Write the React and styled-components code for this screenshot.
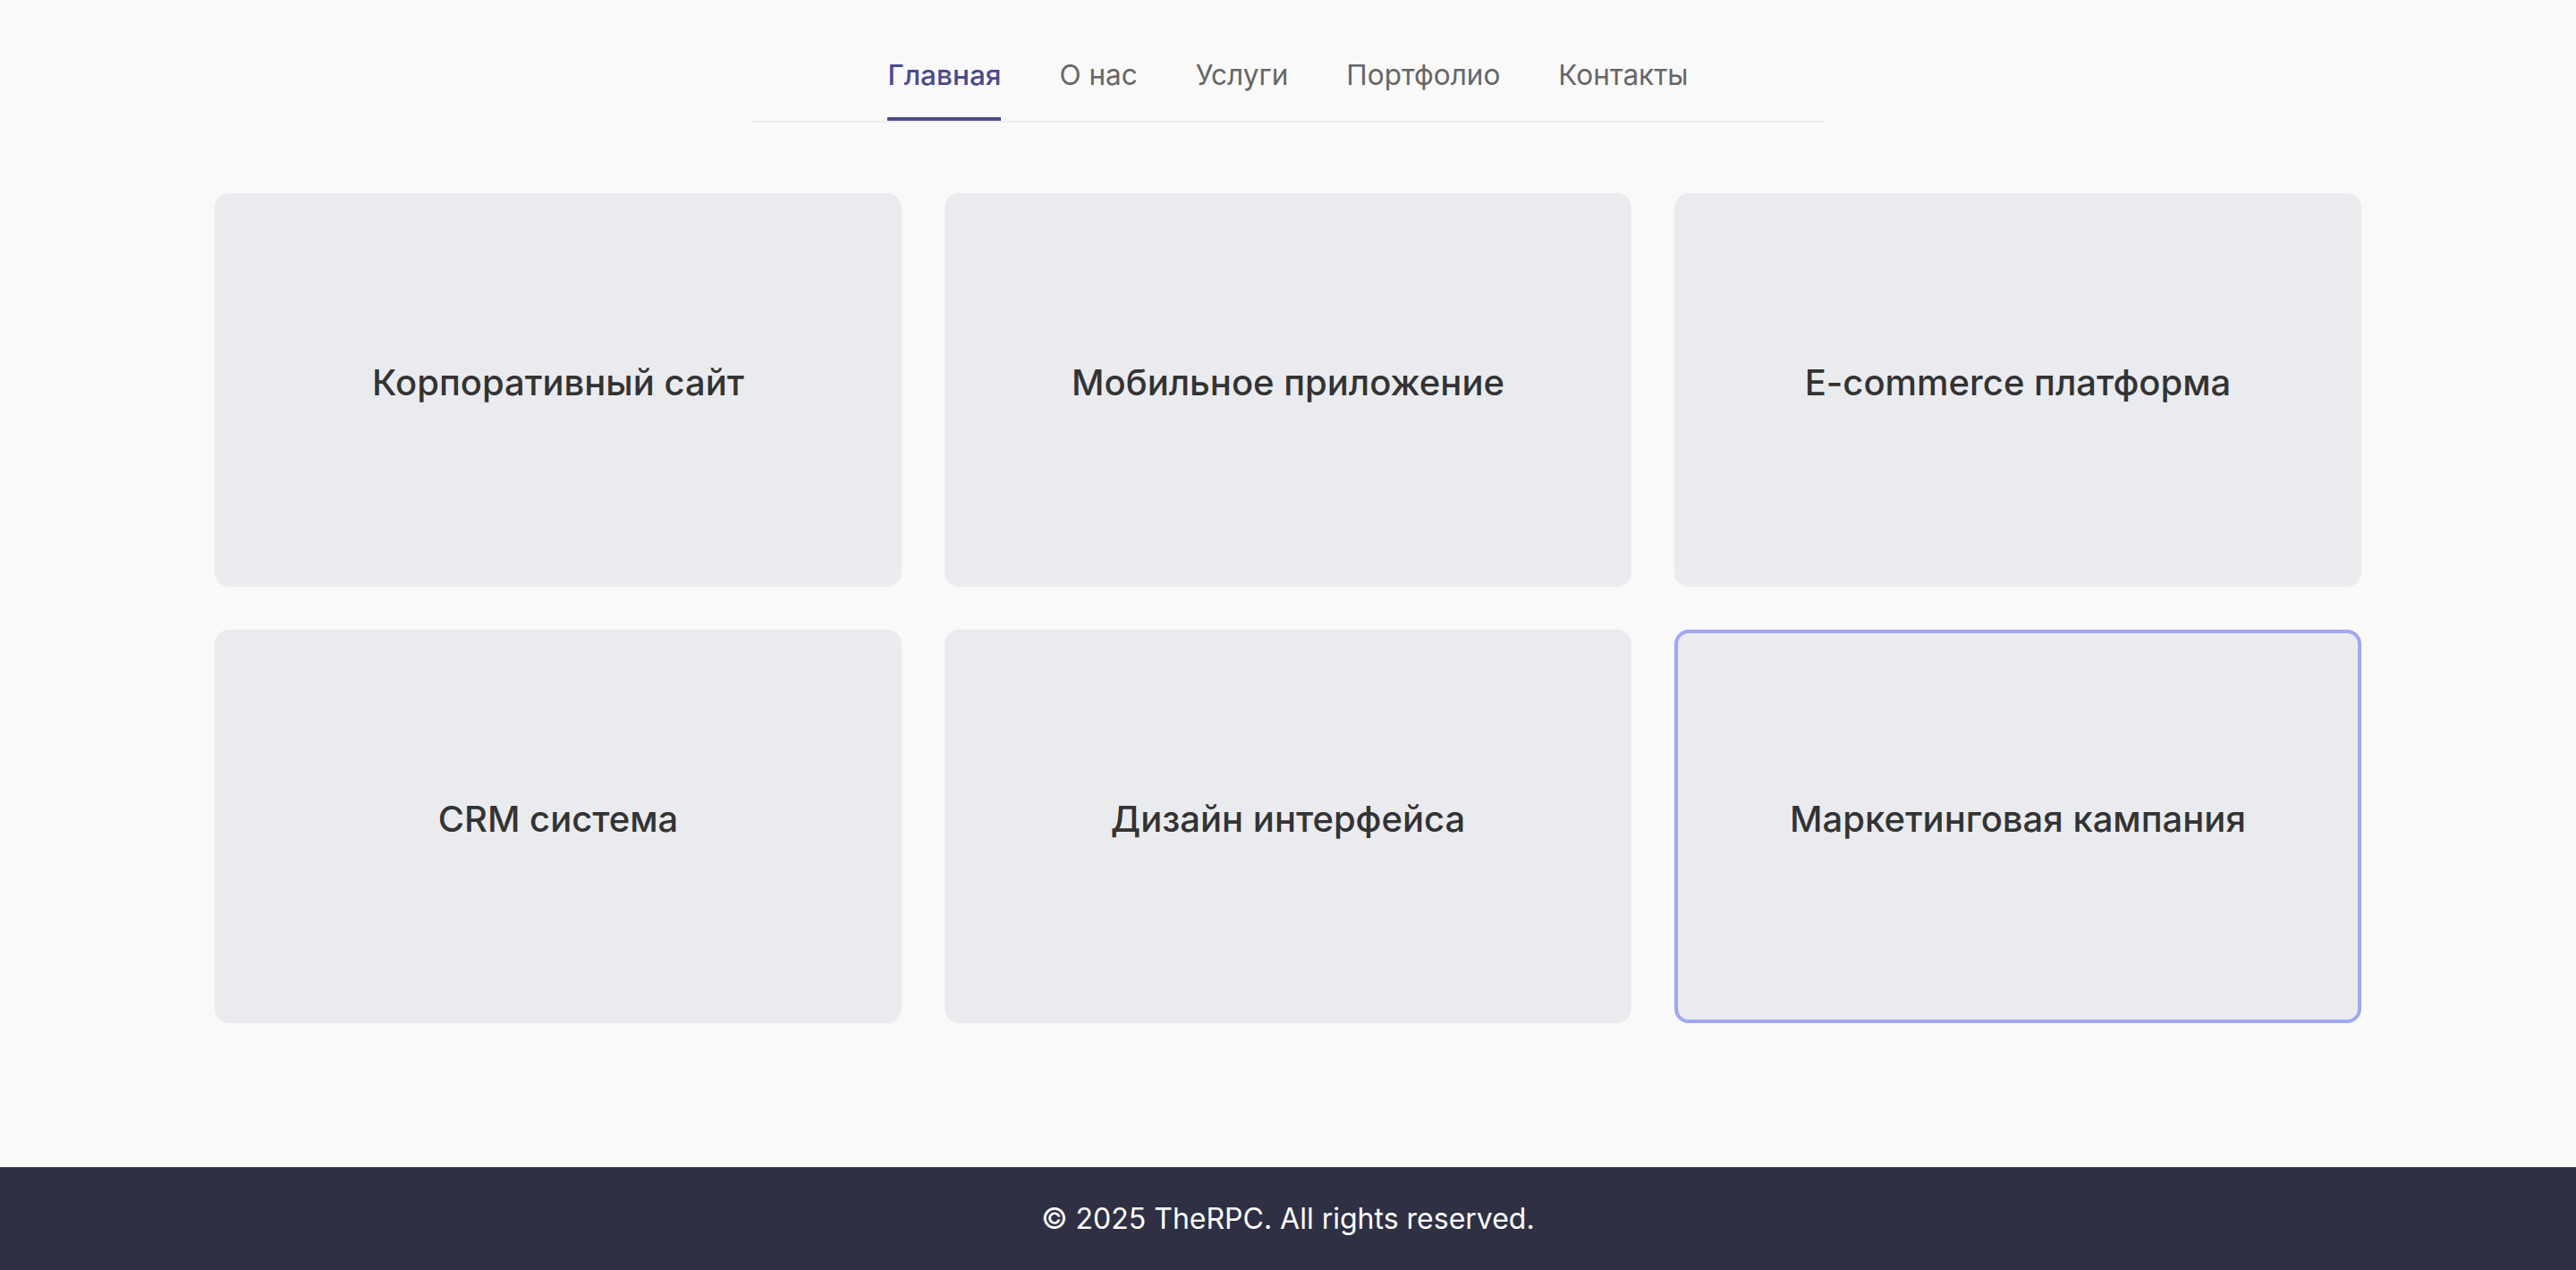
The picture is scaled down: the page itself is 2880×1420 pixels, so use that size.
import React from "react";
import styled, { createGlobalStyle } from "styled-components";

const GlobalStyle = createGlobalStyle`
  * {
    box-sizing: border-box;
  }
  body {
    margin: 0;
    background: #f9f9f9;
    font-family: Inter, "Noto Sans", sans-serif;
    color: #333;
  }
`;

const Page = styled.div`
  min-height: 100vh;
  display: flex;
  flex-direction: column;
`;

const Nav = styled.nav`
  width: 1200px;
  margin: 0 auto;
  padding-top: 63px;
  border-bottom: 2px solid #ececec;
`;

const NavList = styled.ul`
  display: flex;
  justify-content: center;
  gap: 65px;
  list-style: none;
  margin: 0;
  padding: 0;
`;

const NavItem = styled.li`
  font-size: 31.5px;
  line-height: 41px;
  padding-bottom: 27px;
  color: ${({ $active }) => ($active ? "#4a4a8c" : "#666")};
  font-weight: ${({ $active }) => ($active ? 500 : 400)};
  border-bottom: 4px solid ${({ $active }) => ($active ? "#4a4a8c" : "transparent")};
  cursor: pointer;
`;

const Main = styled.main`
  flex: 1;
  padding: 79px 240px 160px;
`;

const Grid = styled.div`
  display: grid;
  grid-template-columns: repeat(3, 1fr);
  gap: 48px;
`;

const Card = styled.div`
  height: 440px;
  display: flex;
  align-items: center;
  justify-content: center;
  padding-bottom: 18px;
  background: #eaebef;
  border-radius: 16px;
  border: 4px solid ${({ $selected }) => ($selected ? "#a3a6f2" : "transparent")};
`;

const CardTitle = styled.h3`
  margin: 0;
  font-size: 40px;
  font-weight: 500;
  color: #333;
`;

const Footer = styled.footer`
  background: #2f3043;
  color: #fff;
  text-align: center;
  padding: 34px 0;
  font-size: 32px;
  line-height: 47px;
`;

const links = ["Главная", "О нас", "Услуги", "Портфолио", "Контакты"];

const projects = [
  "Корпоративный сайт",
  "Мобильное приложение",
  "E-commerce платформа",
  "CRM система",
  "Дизайн интерфейса",
  "Маркетинговая кампания",
];

const App = () => (
  <Page>
    <GlobalStyle />
    <Nav>
      <NavList>
        {links.map((l, i) => (
          <NavItem key={l} $active={i === 0}>
            {l}
          </NavItem>
        ))}
      </NavList>
    </Nav>
    <Main>
      <Grid>
        {projects.map((p, i) => (
          <Card key={p} $selected={i === 5}>
            <CardTitle>{p}</CardTitle>
          </Card>
        ))}
      </Grid>
    </Main>
    <Footer>© 2025 TheRPC. All rights reserved.</Footer>
  </Page>
);

export default App;
